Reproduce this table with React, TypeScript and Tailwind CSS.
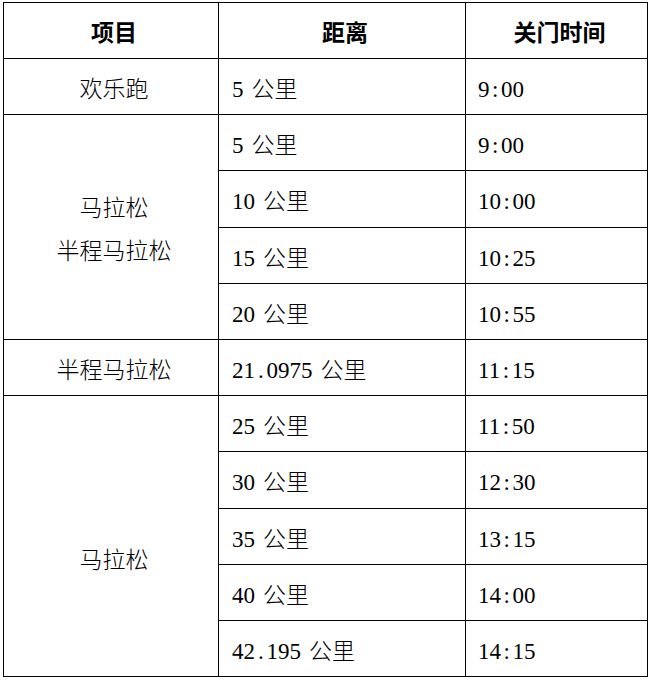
const font = { fontFamily: '"Liberation Serif", "Noto Sans CJK SC", serif' };

type Row = { group?: { label: string[]; span: number; blankTop?: boolean }; distance: string; time: string };

const rows: Row[] = [
  { group: { label: ["欢乐跑"], span: 1 }, distance: "5 公里", time: "9:00" },
  { group: { label: ["马拉松", "半程马拉松"], span: 4 }, distance: "5 公里", time: "9:00" },
  { distance: "10 公里", time: "10:00" },
  { distance: "15 公里", time: "10:25" },
  { distance: "20 公里", time: "10:55" },
  { group: { label: ["半程马拉松"], span: 1 }, distance: "21.0975 公里", time: "11:15" },
  { group: { label: ["马拉松"], span: 5, blankTop: true }, distance: "25 公里", time: "11:50" },
  { distance: "30 公里", time: "12:30" },
  { distance: "35 公里", time: "13:15" },
  { distance: "40 公里", time: "14:00" },
  { distance: "42.195 公里", time: "14:15" },
];

const cell = "border border-black align-middle pt-[6px] leading-[43px]";

// half-width punctuation gets the same advance as a digit, like SimSun
function Mono({ text }: { text: string }) {
  return (
    <>
      {text.split("").map((c, i) =>
        c === ":" || c === "." ? (
          <span key={i} className="inline-block w-[0.5em] text-center">
            {c}
          </span>
        ) : c === " " ? (
          <span key={i} className="inline-block w-[8px]">
            {" "}
          </span>
        ) : (
          <span key={i}>{c}</span>
        )
      )}
    </>
  );
}

export default function App() {
  return (
    <div className="bg-white w-[649px] h-[680px] pt-[2px] pl-[3px]" style={font}>
      <table className="table-fixed border-collapse w-[644px] text-[23px] text-black font-light">
        <colgroup>
          <col className="w-[215px]" />
          <col className="w-[247px]" />
          <col className="w-[182px]" />
        </colgroup>
        <thead>
          <tr className="h-[56px]">
            <th className={`${cell} pl-[6px] text-center font-bold`}>项目</th>
            <th className={`${cell} pl-[6px] text-center font-bold`}>距离</th>
            <th className={`${cell} pl-[6px] text-center font-bold`}>关门时间</th>
          </tr>
        </thead>
        <tbody>
          {rows.map((r, i) => (
            <tr key={i} className="h-[56.2px]">
              {r.group && (
                <td rowSpan={r.group.span} className={`${cell} pl-[6px] text-center`}>
                  {r.group.blankTop && <div className="h-[43px]" />}
                  {r.group.label.map((l) => (
                    <div key={l}>{l}</div>
                  ))}
                </td>
              )}
              <td className={`${cell} pl-[13px] whitespace-nowrap`}>
                <Mono text={r.distance} />
              </td>
              <td className={`${cell} pl-[12px]`}>
                <Mono text={r.time} />
              </td>
            </tr>
          ))}
        </tbody>
      </table>
    </div>
  );
}
